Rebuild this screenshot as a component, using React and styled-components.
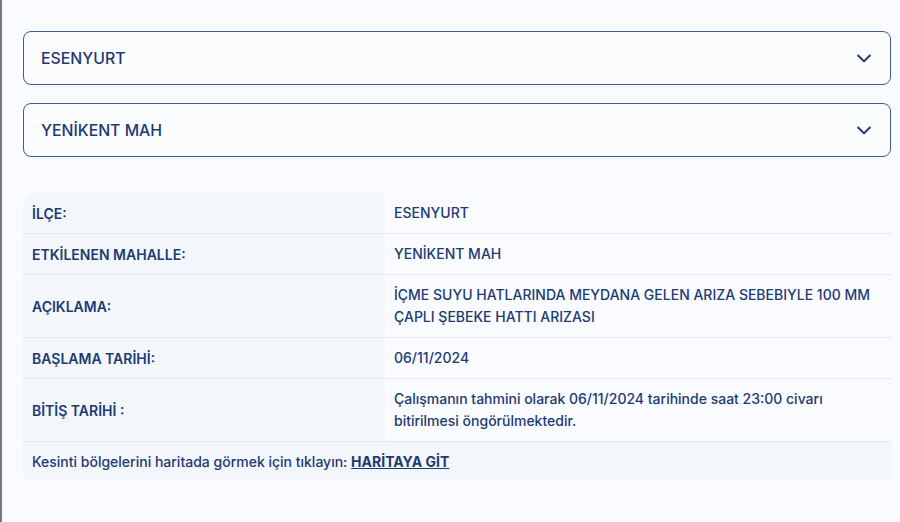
import React from 'react'
import styled, { createGlobalStyle } from 'styled-components'

const GlobalStyle = createGlobalStyle`
    body {
        margin: 0;
        background: #f9fbfe;
        font-family: Inter, "Open Sans", sans-serif;
        color: #1d3a72;
    }
`

function Chevron() {
    return (
        <svg width="20" height="20" viewBox="0 0 24 24" fill="none" stroke="#1d3a72" strokeWidth="2.4" strokeLinecap="round" strokeLinejoin="round">
            <path d="M5 9l7 7 7-7" />
        </svg>
    )
}

const rows = [
    { label: 'İLÇE:', value: 'ESENYURT' },
    { label: 'ETKİLENEN MAHALLE:', value: 'YENİKENT MAH' },
    { label: 'AÇIKLAMA:', value: 'İÇME SUYU HATLARINDA MEYDANA GELEN ARIZA SEBEBIYLE 100 MM ÇAPLI ŞEBEKE HATTI ARIZASI' },
    { label: 'BAŞLAMA TARİHİ:', value: '06/11/2024' },
    { label: 'BİTİŞ TARİHİ :', value: 'Çalışmanın tahmini olarak 06/11/2024 tarihinde saat 23:00 civarı bitirilmesi öngörülmektedir.' },
]

function App() {
    return (
        <Page>
            <GlobalStyle />
            <Select>
                <span>ESENYURT</span>
                <Chevron />
            </Select>
            <Select>
                <span>YENİKENT MAH</span>
                <Chevron />
            </Select>
            <Table>
                {rows.map((r) => (
                    <Row key={r.label}>
                        <Label>{r.label}</Label>
                        <Value>{r.value}</Value>
                    </Row>
                ))}
                <Footer>
                    Kesinti bölgelerini haritada görmek için tıklayın: <MapLink href="#">HARİTAYA GİT</MapLink>
                </Footer>
            </Table>
        </Page>
    )
}

export default App

const Page = styled.div`
    min-height: 522px;
    box-sizing: border-box;
    border-left: 2px solid #7a7a7a;
    padding: 31px 9px 0 21px;
    display: flex;
    flex-direction: column;
`

const Select = styled.div`
    height: 54px;
    box-sizing: border-box;
    border: 1px solid #3d5c9c;
    border-radius: 8px;
    background: #fbfcfe;
    display: flex;
    align-items: center;
    justify-content: space-between;
    padding: 0 16px 0 17px;
    font-size: 15.8px;
    font-weight: 500;
    margin-bottom: 18px;
`

const Table = styled.div`
    margin-top: 18px;
    border-radius: 10px;
    overflow: hidden;
    background: #f3f6fb;
    display: flex;
    flex-direction: column;
    margin-right: -1px;
`

const Row = styled.div`
    display: grid;
    grid-template-columns: 362px 1fr;
    border-bottom: 1px solid #e6e9ee;
    font-size: 14px;
`

const Label = styled.div`
    display: flex;
    align-items: center;
    padding: 0 9px;
    font-weight: 600;
`

const Value = styled.div`
    display: flex;
    align-items: center;
    background: #f9fbfe;
    padding: 9px 9px;
    line-height: 22px;
    font-weight: 500;
    box-sizing: border-box;
`

const Footer = styled.div`
    font-size: 14px;
    font-weight: 500;
    padding: 11px 9px 11px;
    line-height: 17px;
`

const MapLink = styled.a`
    color: #1d3a72;
    font-weight: 700;
    text-decoration: underline;
`
